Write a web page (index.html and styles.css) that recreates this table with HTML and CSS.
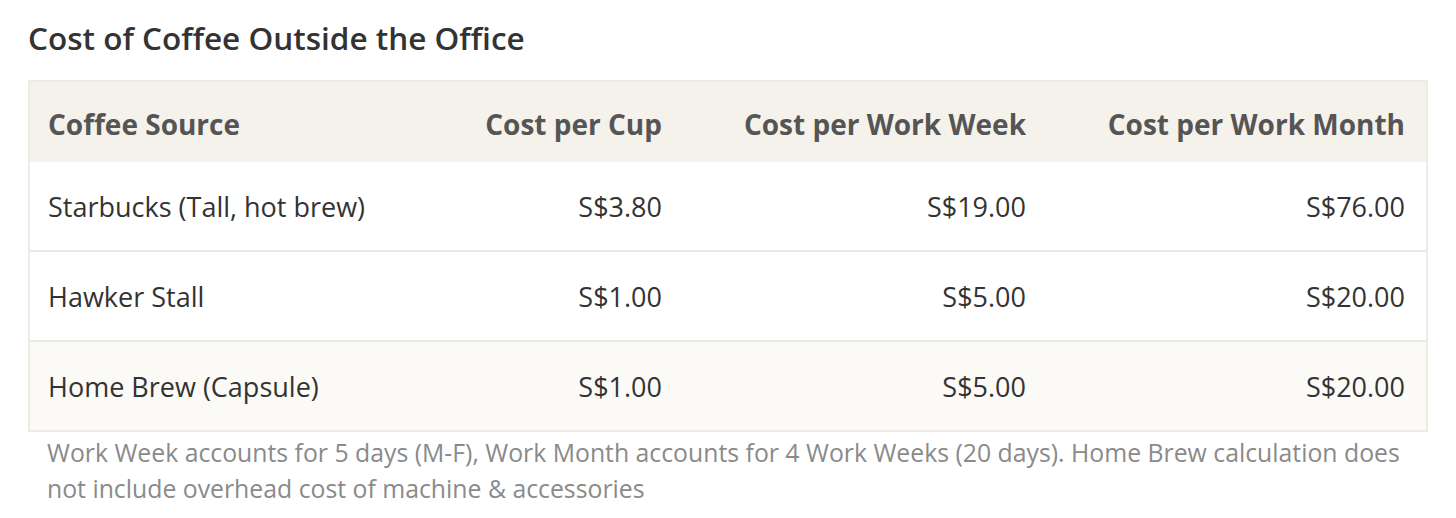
FILE: index.html
```html
<!DOCTYPE html>
<html lang="en">
<head>
<meta charset="utf-8">
<title>Cost of Coffee Outside the Office</title>
<link rel="stylesheet" href="styles.css">
</head>
<body>
<section class="panel">
  <h2 class="title">Cost of Coffee Outside the Office</h2>
  <table class="cost-table">
    <colgroup>
      <col class="c-source">
      <col class="c-cup">
      <col class="c-week">
      <col class="c-month">
    </colgroup>
    <thead>
      <tr>
        <th class="left">Coffee Source</th>
        <th class="num">Cost per Cup</th>
        <th class="num">Cost per Work Week</th>
        <th class="num">Cost per Work Month</th>
      </tr>
    </thead>
    <tbody>
      <tr>
        <td class="left">Starbucks (Tall, hot brew)</td>
        <td class="num">S$3.80</td>
        <td class="num">S$19.00</td>
        <td class="num">S$76.00</td>
      </tr>
      <tr>
        <td class="left">Hawker Stall</td>
        <td class="num">S$1.00</td>
        <td class="num">S$5.00</td>
        <td class="num">S$20.00</td>
      </tr>
      <tr class="alt">
        <td class="left">Home Brew (Capsule)</td>
        <td class="num">S$1.00</td>
        <td class="num">S$5.00</td>
        <td class="num">S$20.00</td>
      </tr>
    </tbody>
  </table>
  <p class="note">Work Week accounts for 5 days (M-F), Work Month accounts for 4 Work Weeks (20 days). Home Brew calculation does not include overhead cost of machine &amp; accessories</p>
</section>
</body>
</html>
```
FILE: styles.css
```css
html, body {
  margin: 0;
  padding: 0;
  background: #ffffff;
}

body {
  font-family: "Open Sans", Lato, "Liberation Sans", sans-serif;
  color: #333333;
}

.panel {
  padding: 16px 28px 0 28px;
  width: 1400px;
}

.title {
  margin: 0 0 20px 0;
  font-size: 31.5px;
  line-height: 44px;
  font-weight: 600;
  color: #333333;
}

.cost-table {
  width: 1400px;
  table-layout: fixed;
  border-collapse: collapse;
  border: 2px solid #eeebe3;
}

.c-source { width: 400px; }
.c-cup { width: 254px; }
.c-week { width: 364px; }
.c-month { width: 380px; }

.cost-table th {
  background: #f4f2eb;
  color: #555555;
  font-size: 28px;
  font-weight: 700;
  line-height: 36px;
  padding: 24px 21px 20px 18px;
}

.cost-table td {
  font-size: 27px;
  line-height: 34px;
  padding: 28px 21px 26px 18px;
  color: #333333;
  border-bottom: 2px solid #e8e8e8;
}

.cost-table tbody tr:last-child td {
  border-bottom: none;
}

.cost-table tr.alt td {
  background: #fbfaf6;
}

.left { text-align: left; }
.num { text-align: right; }

.note {
  margin: 2px 6px 0 19px;
  font-size: 24.8px;
  line-height: 36px;
  color: #8a8a8a;
}
```
